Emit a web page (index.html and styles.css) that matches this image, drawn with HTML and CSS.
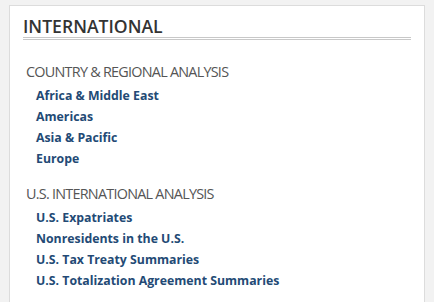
FILE: index.html
```html
<!DOCTYPE html>
<html lang="en">
<head>
<meta charset="utf-8">
<title>International</title>
<link rel="stylesheet" href="styles.css">
</head>
<body>
<div class="card">
  <h2 class="card-title">INTERNATIONAL</h2>
  <div class="section">
    <h3 class="section-title">COUNTRY &amp; REGIONAL ANALYSIS</h3>
    <ul class="links">
      <li><a href="#">Africa &amp; Middle East</a></li>
      <li><a href="#">Americas</a></li>
      <li><a href="#">Asia &amp; Pacific</a></li>
      <li><a href="#">Europe</a></li>
    </ul>
  </div>
  <div class="section">
    <h3 class="section-title">U.S. INTERNATIONAL ANALYSIS</h3>
    <ul class="links">
      <li><a href="#">U.S. Expatriates</a></li>
      <li><a href="#">Nonresidents in the U.S.</a></li>
      <li><a href="#">U.S. Tax Treaty Summaries</a></li>
      <li><a href="#">U.S. Totalization Agreement Summaries</a></li>
    </ul>
  </div>
</div>
</body>
</html>
```

FILE: styles.css
```css
html, body {
  margin: 0;
  padding: 0;
  background: #f2f2f2;
  font-family: "Open Sans", "Liberation Sans", sans-serif;
  overflow: hidden;
}
.card {
  margin: 5px 0 0 9px;
  background: #fff;
  border: 1px solid #dcdcdc;
  padding: 9px 13px 40px;
  box-sizing: content-box;
  width: 388px;
}
.card-title {
  margin: 0;
  font-size: 17.6px;
  line-height: 22px;
  font-weight: 600;
  color: #333;
  border-bottom: 3px double #c8c8c8;
}
.section {
  padding-left: 3px;
}
.card-title + .section {
  margin-top: 22px;
}
.section + .section {
  margin-top: 15px;
}
.section-title {
  margin: 0 0 3px;
  font-size: 14.4px;
  line-height: 20px;
  letter-spacing: -0.75px;
  font-weight: 400;
  color: #555;
}
.links {
  list-style: none;
  margin: 0;
  padding: 0 0 0 10px;
}
.links li {
  font-size: 12.3px;
  line-height: 21px;
}
.links a {
  color: #234a75;
  font-weight: 700;
  text-decoration: none;
}
```
